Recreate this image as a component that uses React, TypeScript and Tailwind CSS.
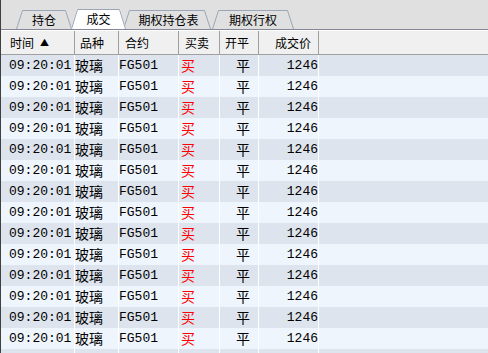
import React from "react";

const tabs = [
  { label: "持仓", w: 56, ml: 0, sel: false, dx: 0 },
  { label: "成交", w: 55, ml: -1, sel: true, dx: 0 },
  { label: "期权持仓表", w: 88, ml: -3, sel: false, dx: 3 },
  { label: "期权行权", w: 82, ml: 1, sel: false, dx: 0 },
];

function Tab({ label, w, ml, sel, dx }: { label: string; w: number; ml: number; sel: boolean; dx: number }) {
  const h = sel ? 20 : 19;
  return (
    <div
      className={sel ? "relative z-10 flex items-center justify-center" : "relative flex items-center justify-center"}
      style={{ width: w, height: h, marginLeft: ml }}
    >
      <svg className="absolute inset-0" width={w} height={h} viewBox={`0 0 ${w} ${h}`}>
        <polygon points={`0,${h} 6,0 ${w - 6},0 ${w},${h}`} fill={sel ? "#ffffff" : "#e0e0e0"} />
        <polyline
          points={`0.5,${h} 6.5,0.5 ${w - 6.5},0.5 ${w - 0.5},${h}`}
          fill="none"
          stroke="#9aa6b6"
          strokeWidth="1"
        />
      </svg>
      <span className="relative text-[12px] leading-none text-black" style={{ marginLeft: dx }}>
        {label}
      </span>
    </div>
  );
}

const cols = [74, 44, 60, 41, 39, 60];

export default function App() {
  const rows = Array.from({ length: 15 });
  return (
    <div
      className="w-[488px] h-[353px] overflow-hidden border-l border-[#404040] bg-[#eff5fc] flex flex-col"
      style={{ fontFamily: '"Noto Sans CJK SC", "Noto Sans", sans-serif' }}
    >
      <div className="h-[29px] shrink-0 bg-[#e0e0e0] flex items-end pl-[15px]">
        {tabs.map((t) => (
          <Tab key={t.label} {...t} />
        ))}
      </div>
      <div className="h-px shrink-0 bg-[#868696]" />
      <div className="h-[25px] shrink-0 flex bg-[#f0f0f0] border-t border-white border-b border-b-[#a0a0a0] text-[12px] text-black">
        <div className="w-[74px] flex items-center pl-[9px] border-r border-[#a0a0a0]">
          <span>时间</span>
          <span className="ml-[6px] text-[9px] leading-none">▲</span>
        </div>
        <div className="w-[44px] flex items-center pl-[5px] border-r border-[#a0a0a0]">品种</div>
        <div className="w-[60px] flex items-center pl-[6px] border-r border-[#a0a0a0]">合约</div>
        <div className="w-[41px] flex items-center pl-[6px] border-r border-[#a0a0a0]">买卖</div>
        <div className="w-[39px] flex items-center pl-[5px] border-r border-[#a0a0a0]">开平</div>
        <div className="w-[60px] flex items-center justify-end pr-[7px] border-r border-[#a0a0a0]">成交价</div>
        <div className="flex-1" />
      </div>
      <div className="flex flex-col">
        {rows.map((_, i) => (
          <div
            key={i}
            className={
              i % 2 === 0
                ? "h-[21px] shrink-0 flex bg-[#dde4ed] text-black"
                : "h-[21px] shrink-0 flex bg-[#eff5fc] text-black"
            }
          >
            <div
              className="w-[74px] flex items-center pl-[8px] border-r border-white text-[13px]"
              style={{ fontFamily: '"Liberation Mono", monospace' }}
            >
              09:20:01
            </div>
            <div className="w-[44px] flex items-center pl-0 border-r border-white text-[14px]">玻璃</div>
            <div
              className="w-[60px] flex items-center pl-0 border-r border-white text-[13px]"
              style={{ fontFamily: '"Liberation Mono", monospace' }}
            >
              FG501
            </div>
            <div className="w-[41px] flex items-center pl-[2px] border-r border-white text-[14px] text-[#ff0000]">买</div>
            <div className="w-[39px] flex items-center pl-[16px] border-r border-white text-[14px]">平</div>
            <div
              className="w-[60px] flex items-center justify-end pr-0 border-r border-white text-[13px]"
              style={{ fontFamily: '"Liberation Mono", monospace' }}
            >
              1246
            </div>
            <div className="flex-1" />
          </div>
        ))}
      </div>
    </div>
  );
}
